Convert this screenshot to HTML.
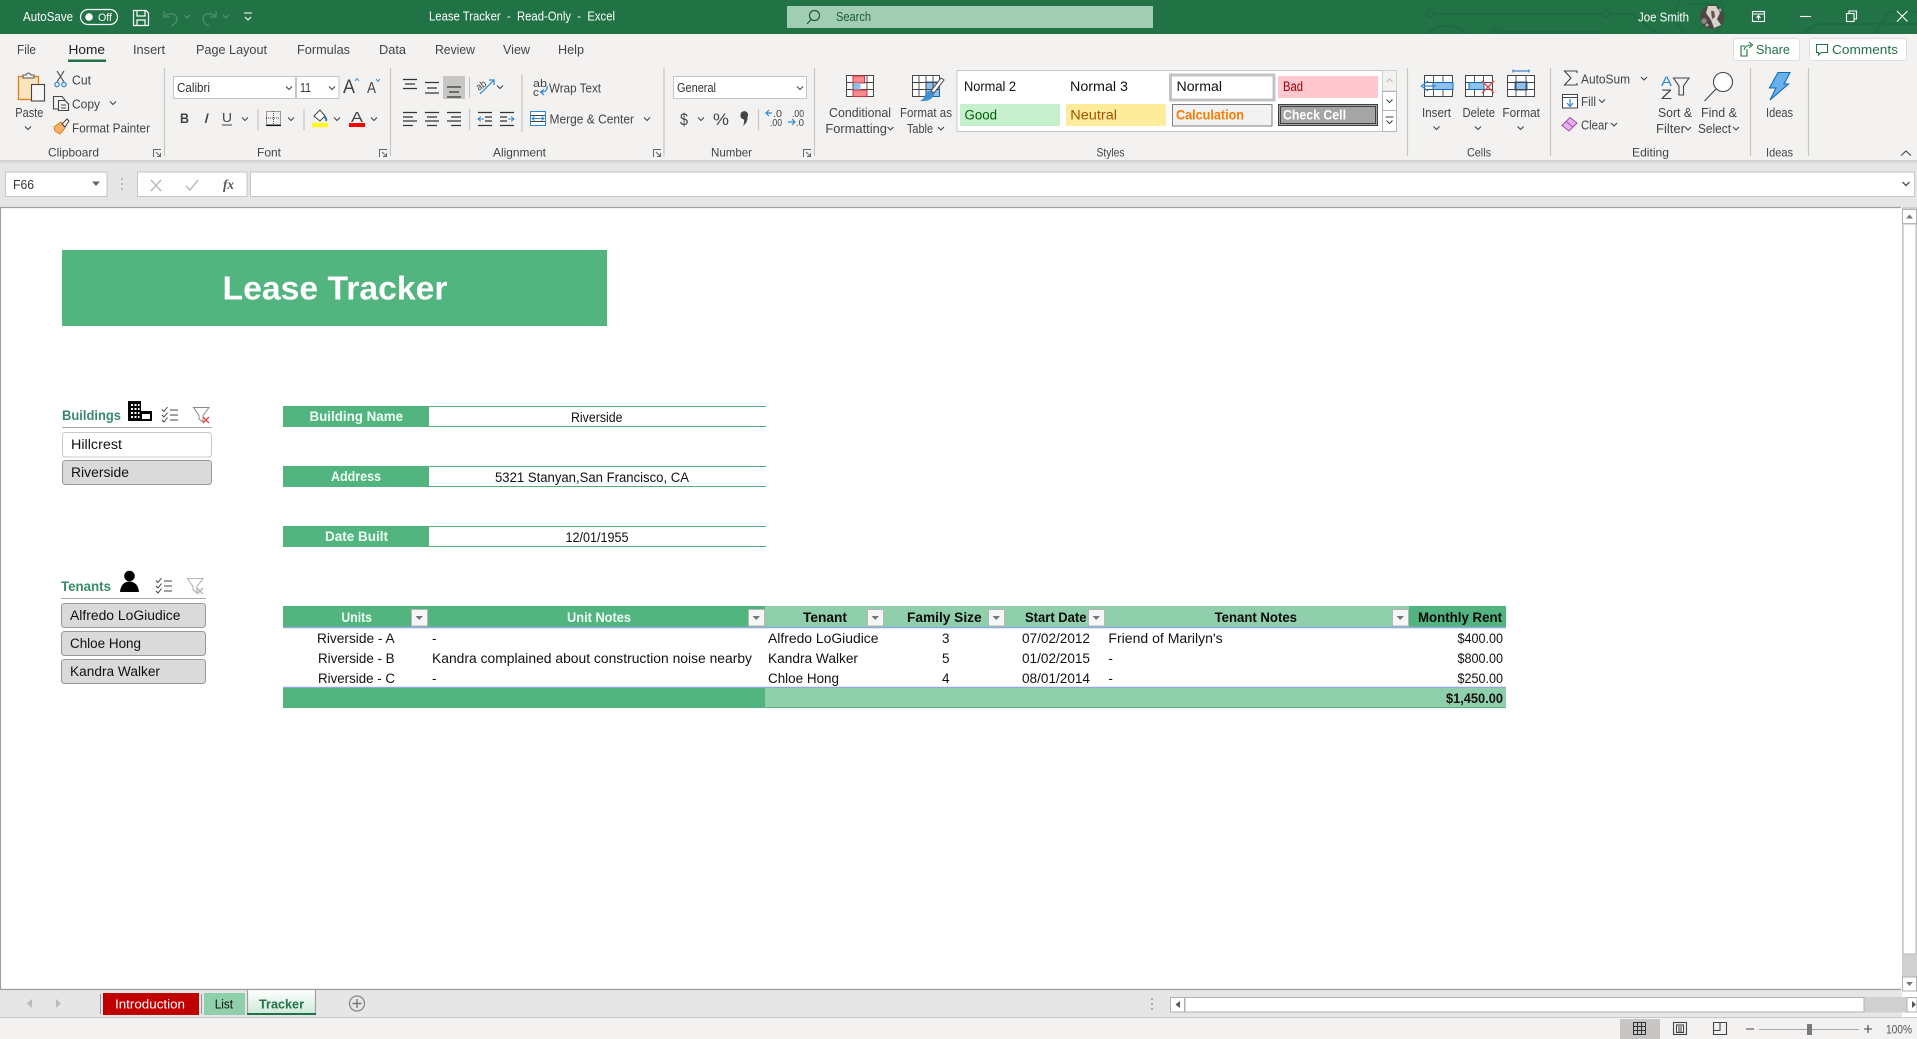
<!DOCTYPE html>
<html><head><meta charset="utf-8"><title>Lease Tracker - Excel</title>
<style>
html,body{margin:0;padding:0;width:1917px;height:1039px;overflow:hidden;background:#fff}
svg{display:block}
text{font-family:"Liberation Sans",sans-serif;font-size:12.5px;fill:#444}
.w{fill:#fff}
.s{fill:#444;font-size:12px}
.b{font-weight:bold}
.c{fill:#111;font-size:13.5px}
.h{font-size:13.5px;font-weight:bold;fill:#f0fff5}
.k{font-size:13.5px;font-weight:bold;fill:#0a0a0a}
.d{stroke:#333;stroke-width:1.2;fill:none}
.sep{stroke:#c8c6c4;stroke-width:1.2}
</style></head><body>
<svg width="1917" height="1039" viewBox="0 0 1917 1039" xmlns="http://www.w3.org/2000/svg">
<defs>
<clipPath id="tb"><rect width="1917" height="34"/></clipPath>
<path id="ch" d="M-3-1.5L0 1.5L3-1.5" fill="none" stroke="#444" stroke-width="1.1"/>
<path id="ln" d="M.5 8V.5H8M3 3L7.5 7.5M7.5 4V7.5H4" fill="none" stroke="#666" stroke-width="1"/>
<g id="fb"><rect x=".5" y=".5" width="16" height="16.5" fill="#f6f6f6" stroke="#b5b5b5"/><path d="M4.5 7H12L8.2 11Z" fill="#777"/></g>
<g id="chk" fill="none" stroke="#444" stroke-width="1"><path d="M0 2.5L2 4.5L5.5 0M0 8L2 10L5.5 5.5M0 13L2 15L5.5 10.5"/><path d="M8 3H16M8 8H16M8 13H16"/></g>
<linearGradient id="tg" x1="0" y1="0" x2="0" y2="1"><stop offset="0" stop-color="#fff"/><stop offset="1" stop-color="#cfeadb"/></linearGradient>
<linearGradient id="rs" x1="0" y1="0" x2="0" y2="1"><stop offset="0" stop-color="#cfcfcf"/><stop offset="1" stop-color="#e6e6e6"/></linearGradient>
</defs>

<!-- backgrounds -->
<rect width="1917" height="1039" fill="#fff"/>
<rect width="1917" height="34" fill="#217346"/>
<rect y="34" width="1917" height="126" fill="#f3f2f1"/>
<rect y="160" width="1917" height="47" fill="#e6e6e6"/>
<rect y="160" width="1917" height="4" fill="url(#rs)"/>

<!-- title bar circuit pattern -->
<g fill="none" stroke="#1e6b41" stroke-width="2" clip-path="url(#tb)">
<circle cx="1430" cy="14" r="3.5"/><path d="M1434 14H1603"/><circle cx="1606" cy="14" r="3.5"/><path d="M1610 14H1632L1658 34"/>
<path d="M1428 34Q1434 26 1447 26Q1460 26 1466 34"/><circle cx="1495" cy="32" r="3"/><path d="M1498 32H1600"/>
<circle cx="1700" cy="14" r="24"/><path d="M1690 4H1716L1700 30"/>
<path d="M1800 34L1818 24H1917M1875 34L1888 12H1917"/>
</g>

<!-- title bar -->
<text class="w" x="23" y="21" textLength="50" lengthAdjust="spacingAndGlyphs">AutoSave</text>
<rect x="80.5" y="9.5" width="37" height="15" rx="7.5" fill="none" stroke="#fff" stroke-width="1.2"/>
<circle cx="89" cy="17" r="3.8" fill="#fff"/>
<text class="w" x="98" y="21" style="font-size:11px" textLength="14" lengthAdjust="spacingAndGlyphs">Off</text>
<g fill="none" stroke="#fff" stroke-width="1.2"><path d="M133.5 10.5H146L148.5 13V25.5H133.5Z"/><path d="M137 10.5V16H145V10.5M137 25.5V20H145V25.5"/></g>
<g fill="none" stroke="#4f8f6c" stroke-width="1.3"><path d="M164 11V17H170M164 17C168 12 177 13 177 19C177 22 174 25 171 26"/><path d="M184 15L187 18L190 15"/><path d="M216 11V17H210M216 17C212 12 203 13 203 19C203 22 206 25 209 26"/><path d="M223 15L226 18L229 15"/></g>
<path d="M244 13H252M245 17L248 20L251 17" fill="none" stroke="#fff" stroke-width="1.1"/>
<text class="w" x="429" y="20.5" style="white-space:pre" textLength="186" lengthAdjust="spacingAndGlyphs">Lease Tracker  -  Read-Only  -  Excel</text>
<rect x="787" y="6" width="366" height="22" fill="#a1cdb4"/>
<g fill="none" stroke="#1c5c3a" stroke-width="1.2"><circle cx="814.5" cy="15.5" r="5"/><path d="M811 19.5L807 24"/></g>
<text x="836" y="21" style="fill:#1c5c3a" textLength="35" lengthAdjust="spacingAndGlyphs">Search</text>
<text class="w" x="1638" y="21.5" textLength="51" lengthAdjust="spacingAndGlyphs">Joe Smith</text>
<circle cx="1712" cy="17" r="12" fill="#4d4744"/>
<path d="M1708 6L1716 6L1720 13L1717 19L1721 25L1714 28L1711 20L1706 13Z" fill="#d8d2cc"/>
<path d="M1711 11L1714 11L1715 17L1712 19Z" fill="#6a5048"/><circle cx="1704" cy="21" r="2.8" fill="#8d8580"/><circle cx="1720" cy="10" r="1.500" fill="#a8a09a"/><circle cx="1707" cy="25" r="1.500" fill="#b5aea8"/>
<g fill="none" stroke="#fff" stroke-width="1.1"><rect x="1752.5" y="11.5" width="12" height="10"/><path d="M1752.5 14H1764.5M1758.5 20V16M1756.5 18L1758.5 15.5L1760.5 18"/><path d="M1800 16.5H1811"/><rect x="1846.5" y="13.5" width="7.5" height="8"/><path d="M1849 13.5V11H1856.5V19H1854"/><path d="M1897 11L1907.5 21.5M1907.5 11L1897 21.5"/></g>

<!-- tabs -->
<text x="17" y="54" textLength="19" lengthAdjust="spacingAndGlyphs">File</text>
<text x="68.5" y="54" style="fill:#222" textLength="36.5" lengthAdjust="spacingAndGlyphs">Home</text>
<rect x="68" y="59.5" width="38" height="2.5" fill="#217346"/>
<text x="133" y="54" textLength="32" lengthAdjust="spacingAndGlyphs">Insert</text>
<text x="196" y="54" textLength="71" lengthAdjust="spacingAndGlyphs">Page Layout</text>
<text x="297" y="54" textLength="53" lengthAdjust="spacingAndGlyphs">Formulas</text>
<text x="379" y="54" textLength="27" lengthAdjust="spacingAndGlyphs">Data</text>
<text x="435" y="54" textLength="40" lengthAdjust="spacingAndGlyphs">Review</text>
<text x="503" y="54" textLength="27" lengthAdjust="spacingAndGlyphs">View</text>
<text x="558" y="54" textLength="26" lengthAdjust="spacingAndGlyphs">Help</text>

<!-- share / comments -->
<rect x="1733.5" y="38.5" width="66" height="22" rx="2" fill="#fff" stroke="#e1dfdd"/>
<g fill="none" stroke="#217346" stroke-width="1.1"><path d="M1747 49V56H1741V46H1745"/><path d="M1744 50C1745 46 1748 45 1751 45M1749 42L1752.5 45L1749 48"/></g>
<text x="1756" y="54" style="fill:#217346;font-size:13px" textLength="34" lengthAdjust="spacingAndGlyphs">Share</text>
<rect x="1809.5" y="38.5" width="97" height="22" rx="2" fill="#fff" stroke="#e1dfdd"/>
<path d="M1816.5 44.5H1827.5V52.5H1821L1818.5 55V52.5H1816.5Z" fill="none" stroke="#217346" stroke-width="1.1"/>
<text x="1832" y="54" style="fill:#217346;font-size:13px" textLength="66" lengthAdjust="spacingAndGlyphs">Comments</text>

<!-- separators -->
<g class="sep"><path d="M164.5 68V156M390.5 68V156M664 68V156M814.5 68V156M1407.5 68V156M1550.5 68V156M1750.5 68V156M1808.5 68V156M522 74V132"/><path d="M258 109V130M304 109V130M469.5 77V98M469.5 109V130M758.5 109V130"/></g>

<!-- clipboard -->
<rect x="18.5" y="76.5" width="20" height="23" fill="#fbe3bd" stroke="#e67e17" stroke-width="1.3"/>
<path d="M23 78V75H26Q28.500 71 31 75H34V78Z" fill="#f3f2f1" stroke="#555"/>
<rect x="31.500" y="84.500" width="13" height="16.500" fill="#f6f6f6" stroke="#444" stroke-width="1.1"/>
<text x="15.300" y="117" textLength="28" lengthAdjust="spacingAndGlyphs">Paste</text>
<use href="#ch" x="28" y="128"/>
<g fill="none" stroke="#444" stroke-width="1.1"><path d="M57 71L64 82M64 71L57 82"/></g>
<g fill="none" stroke="#2b88d8" stroke-width="1.2"><circle cx="57" cy="84.500" r="2.200"/><circle cx="64" cy="84.500" r="2.200"/></g>
<text x="72" y="84.500" textLength="19" lengthAdjust="spacingAndGlyphs">Cut</text>
<g fill="none" stroke="#444" stroke-width="1.1"><path d="M58 109H53.500V96.500H62L65 100"/><path d="M58.500 100.500H65L68.500 104V110.500H58.500Z"/><path d="M61 105H66M61 108H66"/></g>
<text x="72" y="108.500" textLength="28" lengthAdjust="spacingAndGlyphs">Copy</text>
<use href="#ch" x="113" y="103"/>
<path d="M54 127L61 122L65 128L60 134L55 131Z" fill="#f6b26b" stroke="#e67e17"/>
<path d="M62 124L67 119L69 121L65 127Z" fill="none" stroke="#444"/>
<text x="72" y="132.500" textLength="78" lengthAdjust="spacingAndGlyphs">Format Painter</text>
<text class="s" x="48" y="156.500" textLength="51" lengthAdjust="spacingAndGlyphs">Clipboard</text>
<use href="#ln" x="153" y="149"/>

<!-- font -->
<rect x="173.500" y="76.500" width="122" height="22" fill="#fff" stroke="#c6c6c6"/>
<text x="177" y="92" style="fill:#333" textLength="33" lengthAdjust="spacingAndGlyphs">Calibri</text>
<use href="#ch" x="289" y="88"/>
<rect x="296.500" y="76.500" width="42.500" height="22" fill="#fff" stroke="#c6c6c6"/>
<text x="300" y="92" style="fill:#333" textLength="11" lengthAdjust="spacingAndGlyphs">11</text>
<use href="#ch" x="332" y="88"/>
<text x="343" y="93" style="font-size:19px" textLength="12" lengthAdjust="spacingAndGlyphs">A</text>
<path d="M355 81L357 78.500L359 81" fill="none" stroke="#2b88d8"/>
<text x="367" y="93" style="font-size:16px" textLength="9" lengthAdjust="spacingAndGlyphs">A</text>
<path d="M376 79L378 81.500L380 79" fill="none" stroke="#2b88d8"/>
<text x="180" y="123" class="b" style="font-size:14px" textLength="9" lengthAdjust="spacingAndGlyphs">B</text>
<text x="204" y="123" style="font-size:14px;font-style:italic" textLength="5" lengthAdjust="spacingAndGlyphs">I</text>
<text x="222" y="122" style="font-size:13px" textLength="10" lengthAdjust="spacingAndGlyphs">U</text>
<path d="M222 125H232" stroke="#444"/>
<use href="#ch" x="245" y="119"/>
<g fill="none" stroke="#444" stroke-dasharray="1 1"><rect x="266.500" y="111.500" width="14" height="13"/><path d="M273.500 111V125M266 118H281"/></g>
<path d="M266 125.500H281" stroke="#111" stroke-width="1.200"/>
<use href="#ch" x="291" y="119"/>
<path d="M314 116L320 110L325 116L320 121Z" fill="#fff" stroke="#444"/>
<path d="M324 116Q327 119 326 121" stroke="#2b6fb0" stroke-width="2" fill="none"/>
<rect x="312" y="123" width="16" height="4" fill="#ffff00"/>
<use href="#ch" x="337" y="119"/>
<text x="351" y="122" style="font-size:15px" textLength="12" lengthAdjust="spacingAndGlyphs">A</text>
<rect x="349" y="123" width="16" height="4" fill="#f00"/>
<use href="#ch" x="374" y="119"/>
<text class="s" x="257" y="156.500" textLength="24" lengthAdjust="spacingAndGlyphs">Font</text>
<use href="#ln" x="379" y="149"/>

<!-- alignment -->
<rect x="443" y="76" width="22" height="23" fill="#c8c6c4"/>
<path class="d" d="M403 79.500H417M405 84H415M403 88.500H417M425 82.500H439M427 88H437M425 93H439M447 87H461M449 92H459M447 97H461"/>
<path class="d" d="M403 112.500H417M403 117H413M403 121H417M403 125.500H413M425 112.500H439M427 117H437M425 121H439M427 125.500H437M447 112.500H461M451 117H461M447 121H461M451 125.500H461"/>
<text x="477" y="89" style="font-size:10px" transform="rotate(-35 481 87)" textLength="10" lengthAdjust="spacingAndGlyphs">ab</text>
<path d="M480 94L494 80M489 80H494V85" fill="none" stroke="#2b88d8" stroke-width="1.200"/>
<use href="#ch" x="500" y="87"/>
<text x="533" y="87" style="font-size:11px" textLength="14" lengthAdjust="spacingAndGlyphs">ab</text>
<text x="533" y="96" style="font-size:11px" textLength="6" lengthAdjust="spacingAndGlyphs">c</text>
<path d="M547 86Q548 92 541 92M544 89.500L540.500 92L544 95" fill="none" stroke="#2b88d8" stroke-width="1.200"/>
<text x="549" y="92.500" textLength="52" lengthAdjust="spacingAndGlyphs">Wrap Text</text>
<path class="d" d="M478 112.500H492M478 125.500H492M485 117H492M485 121H492M500 112.500H514M500 125.500H514M500 117H507M500 121H507"/>
<path d="M484 119H478M481 116.500L478 119L481 121.500M508 119H514M511 116.500L514 119L511 121.500" fill="none" stroke="#2b88d8"/>
<rect x="530.500" y="111.500" width="15" height="14" fill="#fff" stroke="#444"/>
<path d="M530 115.500H546M530 121.500H546" stroke="#444"/>
<path d="M532 118.500H544M534.500 116.500L532 118.500L534.500 120.500M541.500 116.500L544 118.500L541.500 120.500" fill="none" stroke="#2b88d8"/>
<rect x="530.500" y="111.500" width="15" height="14" fill="none" stroke="#2b88d8"/>
<text x="549.500" y="123.500" textLength="84.500" lengthAdjust="spacingAndGlyphs">Merge &amp; Center</text>
<use href="#ch" x="647" y="119"/>
<text class="s" x="493" y="156.500" textLength="53" lengthAdjust="spacingAndGlyphs">Alignment</text>
<use href="#ln" x="653" y="149"/>

<!-- number -->
<rect x="673.500" y="76.500" width="133" height="22" fill="#fff" stroke="#c6c6c6"/>
<text x="677" y="92" style="fill:#333" textLength="39" lengthAdjust="spacingAndGlyphs">General</text>
<use href="#ch" x="800" y="88"/>
<text x="680" y="125" style="font-size:17px" textLength="8" lengthAdjust="spacingAndGlyphs">$</text>
<use href="#ch" x="701" y="119"/>
<text x="713" y="125" style="font-size:17px" textLength="16" lengthAdjust="spacingAndGlyphs">%</text>
<path d="M740.500 115a3.800 3.800 0 1 1 7 2q.5 5-4.500 9q1.500-3.500 1-6.500a3.800 3.800 0 0 1-3.500-4.500z" fill="#444"/>
<text x="773" y="117" style="font-size:10px" textLength="9" lengthAdjust="spacingAndGlyphs">.0</text>
<text x="770" y="126" style="font-size:10px" textLength="12" lengthAdjust="spacingAndGlyphs">.00</text>
<path d="M772 113H766M769 110L766 113L769 116" fill="none" stroke="#2b88d8" stroke-width="1.200"/>
<text x="792" y="117" style="font-size:10px" textLength="12" lengthAdjust="spacingAndGlyphs">.00</text>
<text x="796" y="126" style="font-size:10px" textLength="8" lengthAdjust="spacingAndGlyphs">.0</text>
<path d="M788 122H795M792 119L795 122L792 125" fill="none" stroke="#2b88d8" stroke-width="1.200"/>
<text class="s" x="711" y="156.500" textLength="41" lengthAdjust="spacingAndGlyphs">Number</text>
<use href="#ln" x="803" y="149"/>

<!-- conditional formatting -->
<g>
<rect x="846.500" y="75.500" width="27" height="21" fill="#fff" stroke="#444"/>
<path d="M846.500 82.500H873.500M846.500 89.500H873.500M853 75.500V96.500M860 75.500V96.500M867 75.500V96.500" stroke="#444" stroke-width=".9" fill="none"/>
<rect x="853" y="76" width="11.500" height="7" fill="#f8898f" stroke="#d13438"/>
<rect x="853.500" y="83" width="7" height="7" fill="#8dc0ec"/>
<rect x="853" y="90" width="14" height="6.500" fill="#f8898f" stroke="#d13438"/>
</g>
<text x="829" y="117" textLength="62" lengthAdjust="spacingAndGlyphs">Conditional</text>
<text x="825.400" y="133" textLength="61.500" lengthAdjust="spacingAndGlyphs">Formatting</text>
<use href="#ch" x="890.500" y="128.500"/>
<!-- format as table -->
<g>
<rect x="912.500" y="75.500" width="27" height="21" fill="#fff" stroke="#444"/>
<rect x="926" y="82" width="13.500" height="14.500" fill="#8dc0ec" stroke="#0f6cbd"/>
<path d="M912.500 82.500H939.500M912.500 89.500H939.500M919 75.500V96.500M926 75.500V96.500M933 75.500V96.500" stroke="#444" stroke-width=".9" fill="none"/>
<path d="M941 78L944 80L934 93L931 91Z" fill="#fff" stroke="#444"/>
<path d="M930 91Q934 93 933 97Q929 102 920 101Q925 98 925 95Q926 91 930 91Z" fill="#3f8fd6"/>
</g>
<text x="900" y="117" textLength="52" lengthAdjust="spacingAndGlyphs">Format as</text>
<text x="907" y="133" textLength="26" lengthAdjust="spacingAndGlyphs">Table</text>
<use href="#ch" x="941" y="128.500"/>

<!-- styles gallery -->
<rect x="957" y="70.500" width="425.500" height="61" fill="#fff" stroke="#c8c6c4"/>
<text x="964" y="91" style="fill:#111;font-size:13.500px" textLength="52" lengthAdjust="spacingAndGlyphs">Normal 2</text>
<text x="1070" y="91" style="fill:#111;font-size:13.500px" textLength="58" lengthAdjust="spacingAndGlyphs">Normal 3</text>
<rect x="1170.500" y="75" width="103.500" height="25" fill="#fff" stroke="#c3c3c3" stroke-width="3"/>
<text x="1176.500" y="91" style="fill:#111;font-size:13.500px" textLength="45.500" lengthAdjust="spacingAndGlyphs">Normal</text>
<rect x="1278" y="76" width="100" height="22" fill="#ffc7ce"/>
<text x="1283" y="91" style="fill:#9c0006;font-size:13.500px" textLength="20" lengthAdjust="spacingAndGlyphs">Bad</text>
<rect x="960" y="104" width="100" height="22" fill="#c6efce"/>
<text x="964.500" y="119.500" style="fill:#006100;font-size:13.500px" textLength="32.500" lengthAdjust="spacingAndGlyphs">Good</text>
<rect x="1066" y="104" width="100" height="22" fill="#ffeb9c"/>
<text x="1070.300" y="119.500" style="fill:#9c5700;font-size:13.500px" textLength="46.700" lengthAdjust="spacingAndGlyphs">Neutral</text>
<rect x="1172.500" y="104.500" width="99.500" height="21.500" fill="#f2f2f2" stroke="#7f7f7f"/>
<text x="1176" y="119.500" class="b" style="fill:#fa7d00;font-size:13.500px" textLength="68" lengthAdjust="spacingAndGlyphs">Calculation</text>
<rect x="1278" y="104" width="100" height="22" fill="#a5a5a5"/>
<rect x="1278.500" y="104.500" width="99" height="21" fill="none" stroke="#3f3f3f"/>
<rect x="1280.500" y="106.500" width="95" height="17" fill="none" stroke="#3f3f3f"/>
<text x="1283" y="119.500" class="b w" style="font-size:13.500px" textLength="63" lengthAdjust="spacingAndGlyphs">Check Cell</text>
<rect x="1382.500" y="70.500" width="14" height="20.500" fill="#f3f2f1" stroke="#d0d0d0"/>
<rect x="1382.500" y="91.500" width="14" height="19" fill="#fff" stroke="#b5b5b5"/>
<rect x="1382.500" y="110.500" width="14" height="21" fill="#fff" stroke="#b5b5b5"/>
<path d="M1386.500 82L1389.500 79L1392.500 82" stroke="#bbb" fill="none"/>
<use href="#ch" x="1389.500" y="101"/>
<path d="M1385.500 117H1393.500" stroke="#444"/><use href="#ch" x="1389.500" y="122"/>
<text class="s" x="1096.500" y="156.500" textLength="28" lengthAdjust="spacingAndGlyphs">Styles</text>

<!-- cells -->
<g>
<rect x="1424.500" y="75.500" width="28" height="21" fill="#fff" stroke="#444"/>
<path d="M1424.500 82.500H1452.500M1424.500 89.500H1452.500M1433.500 75.500V96.500M1443 75.500V96.500" stroke="#444" stroke-width=".9" fill="none"/>
<rect x="1433" y="82.500" width="20" height="7" fill="#8dc0ec" stroke="#0f6cbd"/>
<path d="M1436 86H1424M1428 81L1421.500 86L1428 91" fill="none" stroke="#2b88d8" stroke-width="1.300"/>
<rect x="1465.500" y="75.500" width="27" height="21" fill="#fff" stroke="#444"/>
<path d="M1465.500 82.500H1492.500M1465.500 89.500H1492.500M1474.500 75.500V96.500M1483.500 75.500V96.500" stroke="#444" stroke-width=".9" fill="none"/>
<rect x="1469" y="82.500" width="15" height="7" fill="#8dc0ec" stroke="#0f6cbd"/>
<path d="M1482 81L1494 93M1494 81L1482 93" stroke="#e8484c" stroke-width="1.400"/>
<rect x="1507.500" y="75.500" width="27" height="21" fill="#fff" stroke="#444"/>
<rect x="1515" y="82" width="12" height="8" fill="#8dc0ec" stroke="#0f6cbd"/>
<path d="M1507.500 82.500H1534.500M1507.500 89.500H1534.500M1516 75.500V96.500M1526 75.500V96.500" stroke="#444" stroke-width=".9" fill="none"/>
<path d="M1513 71H1529M1513 69.500V72.500M1529 69.500V72.500" stroke="#0f6cbd" fill="none"/>
</g>
<text x="1422" y="117" textLength="29" lengthAdjust="spacingAndGlyphs">Insert</text>
<text x="1462.500" y="117" textLength="32.500" lengthAdjust="spacingAndGlyphs">Delete</text>
<text x="1502.400" y="117" textLength="37.600" lengthAdjust="spacingAndGlyphs">Format</text>
<use href="#ch" x="1436.500" y="128"/><use href="#ch" x="1478" y="128"/><use href="#ch" x="1520.600" y="128"/>
<text class="s" x="1467" y="156.500" textLength="24" lengthAdjust="spacingAndGlyphs">Cells</text>

<!-- editing -->
<path d="M1577 73V71H1564.500L1571 78L1564.500 85H1577V83" fill="none" stroke="#444" stroke-width="1.100"/>
<text x="1581" y="83.500" textLength="49" lengthAdjust="spacingAndGlyphs">AutoSum</text>
<use href="#ch" x="1644" y="78.500"/>
<rect x="1562.500" y="94.500" width="15" height="13.500" fill="#fff" stroke="#444"/>
<path d="M1562.500 97.500H1577.500" stroke="#444"/>
<path d="M1570 99V106M1567 103L1570 106.500L1573 103" fill="none" stroke="#2b88d8" stroke-width="1.200"/>
<text x="1581" y="106" textLength="15" lengthAdjust="spacingAndGlyphs">Fill</text>
<use href="#ch" x="1602" y="101"/>
<path d="M1570 117.500L1577 123L1569 131L1562 125.500Z" fill="#e4b3e8" stroke="#a74ab5"/>
<path d="M1566 121.500L1573 127" stroke="#a74ab5"/>
<text x="1581" y="129.500" textLength="27" lengthAdjust="spacingAndGlyphs">Clear</text>
<use href="#ch" x="1614" y="124.500"/>
<text x="1661" y="86" style="font-size:14px;fill:#2b88d8" textLength="11" lengthAdjust="spacingAndGlyphs">A</text>
<text x="1661" y="99" style="font-size:14px;fill:#444" textLength="11" lengthAdjust="spacingAndGlyphs">Z</text>
<path d="M1673.500 78H1689L1683.500 86V95H1679V86Z" fill="none" stroke="#444" stroke-width="1.100"/>
<text x="1658" y="117" textLength="34" lengthAdjust="spacingAndGlyphs">Sort &amp;</text>
<text x="1656" y="133" textLength="29" lengthAdjust="spacingAndGlyphs">Filter</text>
<use href="#ch" x="1688" y="128.500"/>
<circle cx="1723" cy="82" r="9.500" fill="#fff" stroke="#444" stroke-width="1.100"/>
<path d="M1716 89L1704.500 101" stroke="#444" stroke-width="1.100"/>
<text x="1701" y="117" textLength="36" lengthAdjust="spacingAndGlyphs">Find &amp;</text>
<text x="1698" y="133" textLength="33" lengthAdjust="spacingAndGlyphs">Select</text>
<use href="#ch" x="1736" y="128.500"/>
<text class="s" x="1632" y="156.500" textLength="37" lengthAdjust="spacingAndGlyphs">Editing</text>

<!-- ideas -->
<path d="M1778 72.500H1790L1784 84H1788.500L1770 100L1776 88H1769.500Z" fill="#6ab0ea" stroke="#0f6cbd" stroke-width="1.100"/>
<text x="1766" y="117" textLength="27" lengthAdjust="spacingAndGlyphs">Ideas</text>
<text class="s" x="1766" y="156.500" textLength="27" lengthAdjust="spacingAndGlyphs">Ideas</text>
<path d="M1901 155.500L1906 151L1911 155.500" fill="none" stroke="#444" stroke-width="1.100"/>

<!-- formula bar -->
<rect x="5.500" y="172" width="101.500" height="24.500" fill="#fff" stroke="#c6c6c6"/>
<text x="13" y="189" style="fill:#333" textLength="21" lengthAdjust="spacingAndGlyphs">F66</text>
<path d="M92 181.500H100L96 186Z" fill="#666"/>
<path d="M122 178V180M122 183V185M122 188V190" stroke="#aaa" stroke-width="1.500"/>
<rect x="137.500" y="172" width="109.500" height="24.500" fill="#fff" stroke="#c6c6c6"/>
<path d="M151 180L161 191M161 180L151 191" stroke="#bbb" stroke-width="1.500"/>
<path d="M186 186L190 190L198 180" stroke="#bbb" stroke-width="1.500" fill="none"/>
<text x="223" y="189" style="font-family:'Liberation Serif',serif;font-style:italic;font-weight:bold;font-size:14px;fill:#555" textLength="11" lengthAdjust="spacingAndGlyphs">fx</text>
<rect x="250.500" y="172" width="1664" height="24.500" fill="#fff" stroke="#c6c6c6"/>
<path d="M1902.500 182L1906 185.500L1909.500 182" stroke="#555" stroke-width="1.400" fill="none"/>

<!-- sheet frame -->
<path d="M1901 207.500H.5V989.500H1901" fill="none" stroke="#a0a0a0" stroke-width="1.200"/>
<rect x="1902" y="207" width="15" height="783" fill="#d0d0d0"/>
<rect x="1902.500" y="209.500" width="14" height="14" fill="#fff" stroke="#b0b0b0"/>
<path d="M1906 218.500H1913L1909.500 214.500Z" fill="#777"/>
<rect x="1903" y="224" width="13" height="730" fill="#fff" stroke="#b8b8b8"/>
<rect x="1902.500" y="977" width="14" height="14" fill="#fff" stroke="#b0b0b0"/>
<path d="M1906 982H1913L1909.500 986Z" fill="#777"/>

<!-- banner -->
<rect x="62" y="250" width="545" height="76" fill="#52b47f"/>
<text x="222.500" y="299.500" class="b w" style="font-size:33px" textLength="225" lengthAdjust="spacingAndGlyphs">Lease Tracker</text>

<!-- Buildings slicer -->
<text x="62" y="420" class="b" style="fill:#3a8a6a;font-size:14px" textLength="59" lengthAdjust="spacingAndGlyphs">Buildings</text>
<path d="M128 401H141V411H152V421H128Z" fill="#000"/>
<path d="M131 404H133V406H131ZM134.500 404H136.500V406H134.500ZM138 404H139.500V406H138ZM131 408H133V410H131ZM134.500 408H136.500V410H134.500ZM138 408H139.500V410H138ZM131 412H133V414H131ZM134.500 412H136.500V414H134.500ZM138 412H139.500V414H138ZM131 416H133V418H131ZM134.500 416H136.500V418H134.500ZM138 416H139.500V418H138ZM142 414H150V419H142Z" fill="#fff"/>
<use href="#chk" x="162" y="407"/>
<path d="M193.500 407.500H209L203 415.500V422L199 419V415.500Z" fill="none" stroke="#888" stroke-width="1"/>
<path d="M203 417L209 423M209 417L203 423" stroke="#e8484c" stroke-width="1.300"/>
<path d="M62 427.500H212" stroke="#aaa"/>
<rect x="62.500" y="432.500" width="149" height="24.500" rx="3" fill="#fff" stroke="#c8c8c8"/>
<text x="71" y="449" class="c" textLength="51" lengthAdjust="spacingAndGlyphs">Hillcrest</text>
<rect x="62.500" y="460.500" width="149" height="24" rx="3" fill="#dadada" stroke="#999"/>
<text x="71" y="477" class="c" textLength="58" lengthAdjust="spacingAndGlyphs">Riverside</text>

<!-- Tenants slicer -->
<text x="61" y="591" class="b" style="fill:#3a8a6a;font-size:14px" textLength="50" lengthAdjust="spacingAndGlyphs">Tenants</text>
<circle cx="129.500" cy="576" r="5.300" fill="#000"/>
<path d="M120 592Q121 582 129.500 581.500Q138 582 139 592Z" fill="#000"/>
<use href="#chk" x="156" y="578"/>
<path d="M187.500 578.500H203L197 586.500V593L193 590V586.500Z" fill="none" stroke="#b5b5b5" stroke-width="1.100"/>
<path d="M197 588L203 594M203 588L197 594" stroke="#b5b5b5" stroke-width="1.400"/>
<path d="M61 598.500H206" stroke="#aaa"/>
<rect x="61.500" y="603.500" width="144" height="24" rx="3" fill="#dadada" stroke="#999"/>
<text x="70" y="620" class="c" textLength="110.500" lengthAdjust="spacingAndGlyphs">Alfredo LoGiudice</text>
<rect x="61.500" y="631.500" width="144" height="24" rx="3" fill="#dadada" stroke="#999"/>
<text x="70" y="648" class="c" textLength="71" lengthAdjust="spacingAndGlyphs">Chloe Hong</text>
<rect x="61.500" y="659.500" width="144" height="24" rx="3" fill="#dadada" stroke="#999"/>
<text x="70" y="676" class="c" textLength="90" lengthAdjust="spacingAndGlyphs">Kandra Walker</text>

<!-- info rows -->
<g fill="#52b47f"><rect x="283" y="406" width="146" height="21"/><rect x="283" y="466" width="146" height="21"/><rect x="283" y="526" width="146" height="21"/></g>
<path d="M429 406.500H766M429 426.500H766M429 466.500H766M429 486.500H766M429 526.500H766M429 546.500H766" stroke="#52ab7c" fill="none"/>
<text x="309.500" y="421" class="h" textLength="93.500" lengthAdjust="spacingAndGlyphs">Building Name</text>
<text x="331" y="481" class="h" textLength="50" lengthAdjust="spacingAndGlyphs">Address</text>
<text x="325" y="541" class="h" textLength="63" lengthAdjust="spacingAndGlyphs">Date Built</text>
<text x="571" y="422" style="fill:#111;font-size:13.500px" textLength="51.500" lengthAdjust="spacingAndGlyphs">Riverside</text>
<text x="495" y="482" style="fill:#111;font-size:13.500px" textLength="194" lengthAdjust="spacingAndGlyphs">5321 Stanyan,San Francisco, CA</text>
<text x="565.500" y="542" style="fill:#111;font-size:13.500px" textLength="63" lengthAdjust="spacingAndGlyphs">12/01/1955</text>

<!-- table -->
<rect x="283" y="606" width="482" height="21" fill="#52b47f"/>
<rect x="765" y="606" width="644" height="21" fill="#8fcfab"/>
<rect x="1409" y="606" width="97" height="21" fill="#52b47f"/>
<path d="M283 627.500H1506" stroke="#8ea9db" stroke-width="1.500"/>
<path d="M283 687.500H1506" stroke="#8ea9db" stroke-width="1.500"/>
<rect x="283" y="688" width="482" height="20" fill="#52b47f"/>
<rect x="765" y="688" width="741" height="20" fill="#8fcfab"/>
<path d="M765 707.500H1506" stroke="#52b47f"/>
<use href="#fb" x="411" y="609"/><use href="#fb" x="748" y="609"/><use href="#fb" x="867" y="609"/><use href="#fb" x="988" y="609"/><use href="#fb" x="1088" y="609"/><use href="#fb" x="1392" y="609"/>
<text x="341.400" y="622" class="h" textLength="30.600" lengthAdjust="spacingAndGlyphs">Units</text>
<text x="567" y="622" class="h" textLength="64" lengthAdjust="spacingAndGlyphs">Unit Notes</text>
<text x="803" y="622" class="k" textLength="44" lengthAdjust="spacingAndGlyphs">Tenant</text>
<text x="907" y="622" class="k" textLength="74.600" lengthAdjust="spacingAndGlyphs">Family Size</text>
<text x="1025" y="622" class="k" textLength="61.500" lengthAdjust="spacingAndGlyphs">Start Date</text>
<text x="1214.600" y="622" class="k" textLength="82.400" lengthAdjust="spacingAndGlyphs">Tenant Notes</text>
<text x="1418" y="622" class="k" textLength="84" lengthAdjust="spacingAndGlyphs">Monthly Rent</text>

<text x="317" y="643" class="c" textLength="77.600" lengthAdjust="spacingAndGlyphs">Riverside - A</text>
<text x="318" y="663" class="c" textLength="76.600" lengthAdjust="spacingAndGlyphs">Riverside - B</text>
<text x="318" y="683" class="c" textLength="77" lengthAdjust="spacingAndGlyphs">Riverside - C</text>
<text x="432" y="643" class="c">-</text>
<text x="432" y="663" class="c" textLength="320" lengthAdjust="spacingAndGlyphs">Kandra complained about construction noise nearby</text>
<text x="432" y="683" class="c">-</text>
<text x="768" y="643" class="c" textLength="110.500" lengthAdjust="spacingAndGlyphs">Alfredo LoGiudice</text>
<text x="768" y="663" class="c" textLength="90" lengthAdjust="spacingAndGlyphs">Kandra Walker</text>
<text x="768" y="683" class="c" textLength="71" lengthAdjust="spacingAndGlyphs">Chloe Hong</text>
<text x="942" y="643" class="c">3</text>
<text x="942" y="663" class="c">5</text>
<text x="942" y="683" class="c">4</text>
<text x="1022" y="643" class="c" textLength="68" lengthAdjust="spacingAndGlyphs">07/02/2012</text>
<text x="1022" y="663" class="c" textLength="68" lengthAdjust="spacingAndGlyphs">01/02/2015</text>
<text x="1022" y="683" class="c" textLength="68" lengthAdjust="spacingAndGlyphs">08/01/2014</text>
<text x="1108.400" y="643" class="c" textLength="114.300" lengthAdjust="spacingAndGlyphs">Friend of Marilyn's</text>
<text x="1108.400" y="663" class="c">-</text>
<text x="1108.400" y="683" class="c">-</text>
<text x="1457.500" y="643" class="c" textLength="45.500" lengthAdjust="spacingAndGlyphs">$400.00</text>
<text x="1457.500" y="663" class="c" textLength="45.500" lengthAdjust="spacingAndGlyphs">$800.00</text>
<text x="1457.500" y="683" class="c" textLength="45.500" lengthAdjust="spacingAndGlyphs">$250.00</text>
<text x="1446" y="703" class="c b" textLength="57" lengthAdjust="spacingAndGlyphs">$1,450.00</text>

<!-- sheet tabs row -->
<rect y="990.500" width="1902" height="27.500" fill="#e6e6e6"/>
<path d="M0 1017.500H1917" stroke="#c8c8c8"/>
<rect y="1018" width="1917" height="21" fill="#f3f2f1"/>
<path d="M0 989.500H247M316 989.500H1901" stroke="#a0a0a0" stroke-width="1.200"/>
<path d="M32 999V1008L26.500 1003.500Z" fill="#bbb"/><path d="M56 999V1008L61 1003.500Z" fill="#bbb"/>
<path d="M100.500 994V1014M201.500 994V1014" stroke="#999"/>
<rect x="103" y="993" width="96" height="22" fill="#c00000"/>
<text class="w" x="115" y="1008.500" style="font-size:13px" textLength="70" lengthAdjust="spacingAndGlyphs">Introduction</text>
<rect x="204" y="993" width="41" height="22" fill="#8fcfa9"/>
<text x="214.700" y="1008.500" style="fill:#111;font-size:13px" textLength="18.300" lengthAdjust="spacingAndGlyphs">List</text>
<rect x="248" y="990" width="67" height="23" fill="url(#tg)"/>
<path d="M247.500 1014V989.500H315.500V1014" fill="none" stroke="#a0a0a0" stroke-width="1.200"/>
<rect x="247" y="1013" width="69" height="2" fill="#217346"/>
<text x="259" y="1008.500" class="b" style="fill:#217346;font-size:13px" textLength="45" lengthAdjust="spacingAndGlyphs">Tracker</text>
<circle cx="357" cy="1003.500" r="7.500" fill="none" stroke="#888" stroke-width="1.300"/>
<path d="M352.500 1003.500H361.500M357 999V1008" stroke="#777" stroke-width="1.400"/>
<path d="M1152 998V1000M1152 1003V1005M1152 1008V1010" stroke="#999" stroke-width="1.500"/>

<!-- horizontal scrollbar -->
<rect x="1170" y="997" width="747" height="15.500" fill="#d0d0d0"/>
<rect x="1170.500" y="997.500" width="14" height="14.500" fill="#fff" stroke="#b0b0b0"/>
<path d="M1180 1001V1008L1175.500 1004.500Z" fill="#555"/>
<rect x="1185" y="997.500" width="679" height="14.500" fill="#fff" stroke="#b0b0b0"/>
<rect x="1907" y="997.500" width="10" height="14.500" fill="#fff" stroke="#b0b0b0"/>
<path d="M1912 1001V1008L1916 1004.500Z" fill="#555"/>

<!-- status bar -->
<rect x="1620" y="1019" width="40" height="20" fill="#c8c6c4"/>
<path d="M1633.500 1022.500H1645.500V1034.500H1633.500ZM1633.500 1026.500H1645.500M1633.500 1030.500H1645.500M1637.500 1022.500V1034.500M1641.500 1022.500V1034.500" fill="none" stroke="#333"/>
<g fill="none" stroke="#444" stroke-width="1.100"><rect x="1673.500" y="1022.500" width="13" height="12"/><rect x="1676.500" y="1025" width="7" height="7.500"/><path d="M1678 1027H1682M1678 1029H1682M1678 1031H1682"/><path d="M1713.500 1022.500H1726.500V1034.500H1713.500ZM1713.500 1030.500H1720V1022.500"/></g>
<path d="M1746 1029H1754M1864 1029H1872M1868 1025V1033" stroke="#444" stroke-width="1.100"/>
<path d="M1759 1029.500H1859" stroke="#aaa"/>
<rect x="1807" y="1024" width="5" height="11" fill="#7a7a7a"/>
<text x="1886" y="1033.500" style="font-size:12px;fill:#555" textLength="26" lengthAdjust="spacingAndGlyphs">100%</text>
</svg>
</body></html>
